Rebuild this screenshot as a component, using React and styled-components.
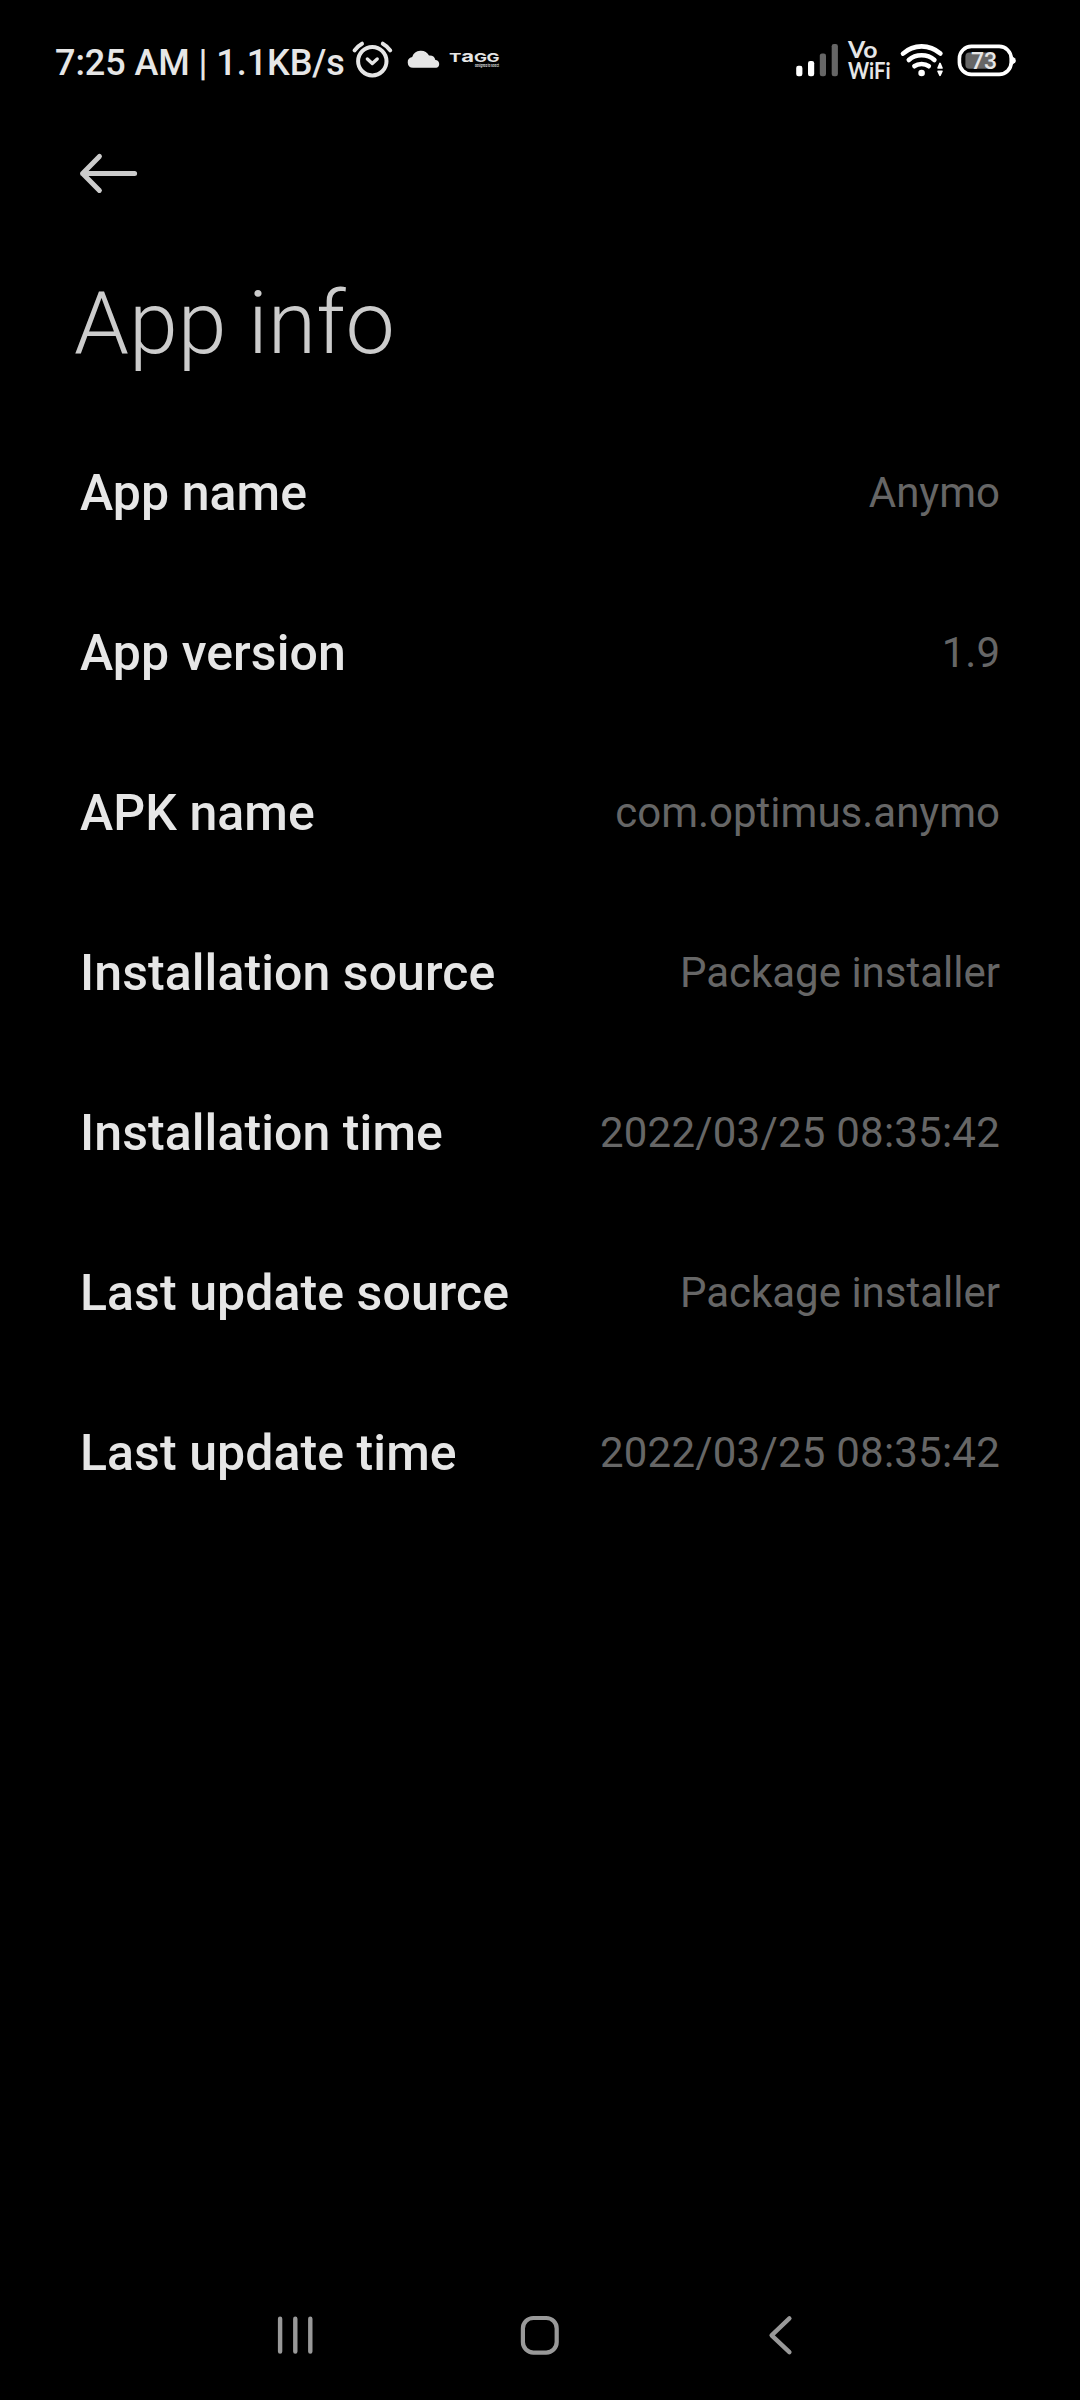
import React from "react";
import styled, { createGlobalStyle } from "styled-components";

const GlobalStyle = createGlobalStyle`
  html, body { margin: 0; background: #000; }
  body { font-family: Roboto, "Liberation Sans", sans-serif; }
`;

const Screen = styled.div`
  box-sizing: border-box;
  width: 1080px;
  height: 2400px;
  background: #000;
  display: flex;
  flex-direction: column;
`;

const StatusBar = styled.header`
  height: 122px;
  flex: none;
  display: flex;
  justify-content: space-between;
  align-items: flex-start;
  padding: 40px 64px 0 55px;
  box-sizing: border-box;
`;

const StatusGroup = styled.div`
  display: flex;
  align-items: flex-start;
`;

const Clock = styled.span`
  width: 296px;
  font-size: 36px;
  font-weight: 500;
  line-height: 47px;
  letter-spacing: -0.07px;
  color: #e6e6e6;
  white-space: nowrap;
`;

const Icon = styled.svg`
  display: block;
  flex: none;
  overflow: visible;
  margin-left: ${(p) => p.$gap || 0}px;
`;

const TopBar = styled.div`
  box-sizing: border-box;
  height: 102px;
  flex: none;
  padding: 30px 78px 0;
`;

const Title = styled.h1`
  margin: 0 0 0 74px;
  height: 189px;
  padding-top: 46px;
  box-sizing: border-box;
  font-size: 88px;
  font-weight: 300;
  line-height: 106px;
  color: #ccc;
`;

const List = styled.dl`
  margin: 0;
  flex: 1;
`;

const Row = styled.div`
  height: 160px;
  padding: 0 80px;
  display: flex;
  align-items: center;
  justify-content: space-between;
`;

const Label = styled.dt`
  font-size: 50px;
  font-weight: 500;
  line-height: 60px;
  letter-spacing: 0.08px;
  color: #e6e6e6;
`;

const Value = styled.dd`
  margin: 0;
  font-size: 42px;
  line-height: 50px;
  letter-spacing: ${(p) => (p.$numeric ? 0.22 : 0)}px;
  color: #666;
`;

const NavBar = styled.nav`
  height: 130px;
  flex: none;
  display: flex;
  justify-content: center;
  align-items: center;
  gap: 200px;
`;

const rows = [
  ["App name", "Anymo"],
  ["App version", "1.9"],
  ["APK name", "com.optimus.anymo"],
  ["Installation source", "Package installer"],
  ["Installation time", "2022/03/25 08:35:42"],
  ["Last update source", "Package installer"],
  ["Last update time", "2022/03/25 08:35:42"],
];

const AlarmIcon = () => (
  <Icon width="42" height="40" viewBox="351 40 42 40" fill="none" stroke="#e6e6e6" strokeWidth="4" strokeLinecap="round" strokeLinejoin="round">
    <circle cx="372.3" cy="61.2" r="14.2" />
    <path d="M354.6 50.3Q357.5 46.2 362 43.7M382.8 43.7Q387.3 46.2 390.2 50.3" />
    <path d="M367.4 59L372.3 63.4L377.2 59" strokeWidth="3.4" />
  </Icon>
);

const CloudIcon = () => (
  <Icon $gap={14} width="34" height="40" viewBox="407 40 34 40" fill="#e6e6e6">
    <path d="M413 67.8A5.5 5.5 0 0 1 412.2 56.9A9.2 9.2 0 0 1 429 55.6A6 6 0 0 1 435.4 60A4 4 0 0 1 436.4 67.8Z" />
  </Icon>
);

const TaggLogo = () => (
  <Icon $gap={8} width="51" height="40" viewBox="449 40 51 40" fill="#e6e6e6" fontFamily="Inter, sans-serif">
    <text y="62" fontSize="12.2" fontWeight="700">
      <tspan x="449" textLength="12.5" lengthAdjust="spacingAndGlyphs">T</tspan>
      <tspan x="461.3" fontSize="15.6" textLength="12.8" lengthAdjust="spacingAndGlyphs">a</tspan>
      <tspan x="474" textLength="13" lengthAdjust="spacingAndGlyphs">G</tspan>
      <tspan x="486.6" textLength="13" lengthAdjust="spacingAndGlyphs">G</tspan>
    </text>
    <text x="475" y="66.8" fontSize="4" fontWeight="600" textLength="24" lengthAdjust="spacingAndGlyphs">designed to select</text>
  </Icon>
);

const SignalIcon = () => (
  <Icon width="42" height="40" viewBox="796 40 42 40">
    <rect x="796.2" y="65.8" width="6.2" height="10.4" rx="2.2" fill="#fff" />
    <rect x="808" y="61" width="6.2" height="15.2" rx="2.2" fill="#fff" />
    <rect x="819.8" y="53.4" width="6.2" height="22.8" rx="2.2" fill="#666" />
    <rect x="831.7" y="44" width="6.2" height="32.2" rx="2.2" fill="#666" />
  </Icon>
);

const VoWifiIcon = () => (
  <Icon $gap={10} width="42" height="40" viewBox="848 40 42 40" fill="#e6e6e6" fontFamily="Lato, sans-serif" fontWeight="700">
    <text fontSize="22">
      <tspan x="848" y="57.8" textLength="29.5" lengthAdjust="spacingAndGlyphs">Vo</tspan>
      <tspan x="848" y="79.2" textLength="42.5" lengthAdjust="spacingAndGlyphs">WiFi</tspan>
    </text>
  </Icon>
);

const WifiIcon = () => (
  <Icon $gap={10} width="44" height="40" viewBox="900 40 44 40" fill="none" stroke="#fff" strokeWidth="4.6" strokeLinecap="round">
    <path d="M903 53.6Q911 46.4 921.6 46.4T940.4 53.6" />
    <path d="M908.8 60Q914 55.2 921.6 55.2T934.4 60" />
    <path d="M914.4 66.2Q917.3 64 921.6 64T928.8 66.2" />
    <circle cx="921.6" cy="73" r="3.3" fill="#fff" stroke="none" />
    <path d="M940 63.4L942 68H938ZM940 75.4L942 71.2H938Z" fill="#fff" strokeWidth="1.6" strokeLinejoin="round" />
  </Icon>
);

const BatteryIcon = () => (
  <Icon $gap={13} width="59" height="40" viewBox="957 40 59 40">
    <rect x="965.4" y="52.4" width="27.6" height="16.4" rx="4" fill="#666" />
    <rect x="959.4" y="46.4" width="51.8" height="28" rx="12" fill="none" stroke="#fff" strokeWidth="3.6" />
    <path d="M1012 56L1015.2 58.4Q1016.4 60.4 1015.2 62.4L1012 65Z" fill="#fff" />
    <text x="984" y="69" fontSize="23" fontWeight="500" fill="#e6e6e6" textAnchor="middle">73</text>
  </Icon>
);

export default function App() {
  return (
    <Screen>
      <GlobalStyle />
      <StatusBar>
        <StatusGroup>
          <Clock>7:25 AM | 1.1KB/s</Clock>
          <AlarmIcon />
          <CloudIcon />
          <TaggLogo />
        </StatusGroup>
        <StatusGroup>
          <SignalIcon />
          <VoWifiIcon />
          <WifiIcon />
          <BatteryIcon />
        </StatusGroup>
      </StatusBar>
      <TopBar>
        <Icon width="60" height="44" viewBox="78 152 60 44" fill="none" stroke="#ccc" strokeWidth="5" strokeLinecap="round" strokeLinejoin="round">
          <path d="M99.4 156.4L82.6 173.4L99.4 190.4M82.6 173.4H134.6" />
        </Icon>
      </TopBar>
      <Title>App info</Title>
      <List>
        {rows.map(([label, value]) => (
          <Row key={label}>
            <Label>{label}</Label>
            <Value $numeric={/^\d{4}/.test(value)}>{value}</Value>
          </Row>
        ))}
      </List>
      <NavBar>
        <Icon width="40" height="40" viewBox="4.7 0 40 40" stroke="#999" strokeWidth="4.4" strokeLinecap="round">
          <path d="M4.8 3.8V36.6M20 3.8V36.6M35 3.8V36.6" />
        </Icon>
        <Icon width="40" height="40" viewBox="0 0 40 40" fill="none" stroke="#999" strokeWidth="4.2">
          <rect x="2.9" y="3" width="33.8" height="34.6" rx="10.5" />
        </Icon>
        <Icon width="40" height="40" viewBox="0 0 40 40" fill="none" stroke="#999" strokeWidth="4.4" strokeLinecap="round" strokeLinejoin="round">
          <path d="M29.4 3.4L11.6 20.3L29.4 37.2" />
        </Icon>
      </NavBar>
    </Screen>
  );
}
